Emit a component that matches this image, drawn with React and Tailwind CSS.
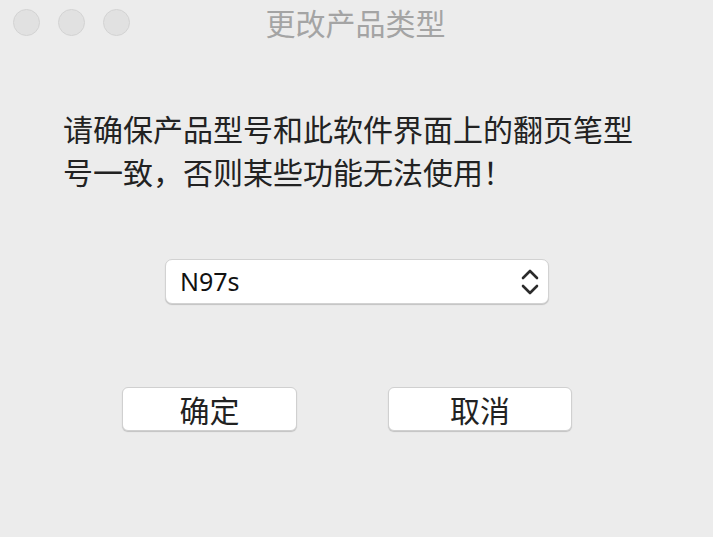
import React, { useState } from 'react';

const cjk = { fontFamily: '"Noto Sans CJK SC", "Noto Sans", sans-serif' };

function TrafficLight() {
  return <span className="w-[27px] h-[27px] rounded-full bg-[#e1e1e1] border border-[#d3d3d3]" />;
}

export default function App() {
  const [model, setModel] = useState('N97s');

  return (
    <div className="w-[713px] h-[537px] bg-[#ececec] flex flex-col" style={cjk}>
      {/* Title bar */}
      <div className="relative h-[45px] flex items-center justify-center">
        <div className="absolute left-[13px] top-[9px] flex gap-[18px]">
          <TrafficLight />
          <TrafficLight />
          <TrafficLight />
        </div>
        <span className="text-[30px] leading-none text-[#a4a4a4] -mt-[2px] ml-[-2px]">更改产品类型</span>
      </div>

      {/* Message */}
      <p className="mt-[62px] ml-[63px] whitespace-nowrap text-[30px] leading-[43px] text-[#222]">
        请确保产品型号和此软件界面上的翻页笔型
        <br />
        号一致，否则某些功能无法使用！
      </p>

      {/* Model select */}
      <div className="mt-[66px] ml-[165px] w-[384px] h-[45px] bg-white rounded-[7px] border border-[#d2d2d2] shadow-[0_1px_1px_rgba(0,0,0,0.18)] flex items-center justify-between pl-[14px] pr-[9px]">
        <span className="text-[25px] text-[#111]" style={{ fontFamily: '"Noto Sans", sans-serif' }}>{model}</span>
        <svg width="18" height="28" viewBox="0 0 18 28" fill="none" stroke="#2b2b2b" strokeWidth="2.6" strokeLinecap="round" strokeLinejoin="round">
          <path d="M2 10 L9 3 L16 10" />
          <path d="M2 18 L9 25 L16 18" />
        </svg>
      </div>

      {/* Buttons */}
      <div className="mt-[83px] flex">
        <button
          className="ml-[122px] w-[175px] h-[44px] bg-white rounded-[6px] border border-[#d0d0d0] shadow-[0_1px_1px_rgba(0,0,0,0.18)] text-[30px] leading-none text-[#222]"
          onClick={() => setModel(model)}
        >
          确定
        </button>
        <button className="ml-[91px] w-[184px] h-[44px] bg-white rounded-[6px] border border-[#d0d0d0] shadow-[0_1px_1px_rgba(0,0,0,0.18)] text-[30px] leading-none text-[#222]">
          取消
        </button>
      </div>
    </div>
  );
}
